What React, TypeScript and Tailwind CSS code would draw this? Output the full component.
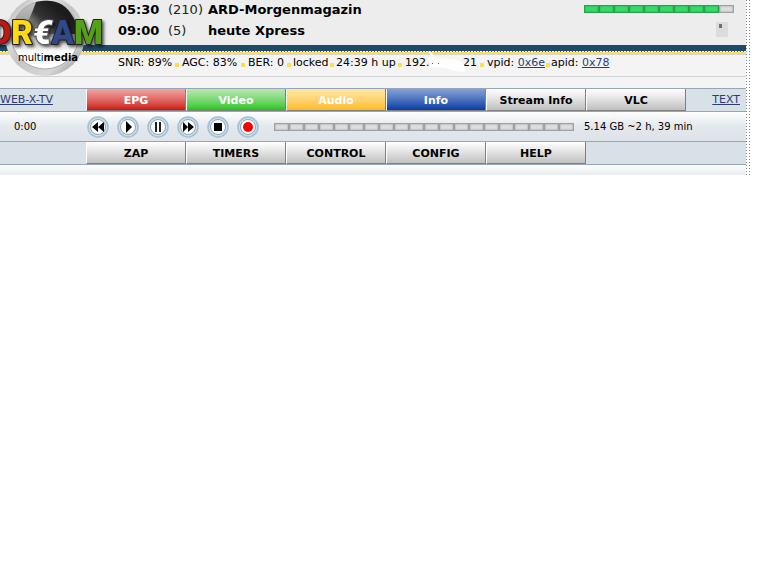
import { ReactNode } from "react";

type Tab = {
  label: string;
  className: string;
};

const mainTabs: Tab[] = [
  { label: "EPG", className: "text-white from-[#f4a4a4] via-[#e88080] to-[#cc0c0c]" },
  { label: "Video", className: "text-white from-[#b8e8b0] via-[#96de8e] to-[#14c80c]" },
  { label: "Audio", className: "text-white from-[#ffe6a4] via-[#ffdc88] to-[#fdbc10]" },
  { label: "Info", className: "text-white from-[#84a0dc] via-[#6486c8] to-[#083ca4]" },
  { label: "Stream Info", className: "text-black from-white via-[#eeeeee] to-[#c0c0c0]" },
  { label: "VLC", className: "text-black from-white via-[#eeeeee] to-[#c0c0c0]" },
];

const subTabs = ["ZAP", "TIMERS", "CONTROL", "CONFIG", "HELP"];

const events = [
  { time: "05:30", duration: "(210)", title: "ARD-Morgenmagazin" },
  { time: "09:00", duration: "(5)", title: "heute Xpress" },
];

const players = [
  { label: "Rewind", icon: <path d="M11 6v10l-6-5zM17 6v10l-6-5z" fill="#000" /> },
  { label: "Play", icon: <path d="M9 5l6 6-6 6z" fill="#000" /> },
  { label: "Pause", icon: <path d="M8 6h2v10H8zM12 6h2v10h-2z" fill="#222" /> },
  { label: "Forward", icon: <path d="M6 6v10l5-5zM11 6v10l6-5z" fill="#000" /> },
  { label: "Stop", icon: <path d="M7 7h8v8H7z" fill="#000" /> },
  { label: "Record", icon: <circle cx="11" cy="11" r="5" fill="#f80000" /> },
];

function TabButton({ label, className }: Tab) {
  return (
    <button
      type="button"
      className={`h-[22px] w-[100px] shrink-0 border-r border-b border-l border-r-[#808080] border-b-[#808080] border-l-white bg-linear-to-b via-30% pt-[3px] text-[11px] leading-[18px] font-bold ${className}`}
    >
      {label}
    </button>
  );
}

function Segments({ count, filled }: { count: number; filled: number }) {
  return (
    <div className="flex h-2 shrink-0">
      {Array.from({ length: count }, (_, i) => (
        <span
          key={i}
          className={
            i < filled
              ? "w-[15px] border-x border-y border-[#28a050] bg-[#36dc68] shadow-[inset_0_0_2px_#28a050]"
              : "w-[15px] border-x border-y border-[#a0a0a4] bg-[#dedede] shadow-[inset_0_0_2px_#909094]"
          }
        />
      ))}
    </div>
  );
}

// text first, then a yellow square centred in whatever is left before the next one
function Stat({ width, last, children }: { width: string; last?: boolean; children: ReactNode }) {
  return (
    <li className={`flex shrink-0 whitespace-nowrap ${width}`}>
      {children}
      {!last && (
        <span aria-hidden="true" className="flex grow justify-center pt-2">
          <span className="size-1 bg-[#ffdc50]" />
        </span>
      )}
    </li>
  );
}

function Logo() {
  return (
    <svg width="112" height="80" viewBox="0 0 112 80" className="absolute top-0 left-0" role="img" aria-label="Dream multimedia">
      <defs>
        <linearGradient id="rim" x1="0" y1="0" x2="1" y2="1">
          <stop offset="0" stopColor="#8c8c8c" />
          <stop offset="0.25" stopColor="#e8e8e8" />
          <stop offset="0.5" stopColor="#c4c4c4" />
          <stop offset="0.75" stopColor="#d8d8d8" />
          <stop offset="1" stopColor="#808080" />
        </linearGradient>
        <linearGradient id="disc" x1="0" y1="0" x2="0" y2="1">
          <stop offset="0" stopColor="#c4c4c4" />
          <stop offset="0.5" stopColor="#8c8c8c" />
          <stop offset="0.55" stopColor="#bbb" />
          <stop offset="0.75" stopColor="#fff" />
        </linearGradient>
        <linearGradient id="dark" x1="0" y1="0.6" x2="0.6" y2="0.2">
          <stop offset="0" stopColor="#333" stopOpacity="0" />
          <stop offset="0.5" stopColor="#333" />
          <stop offset="1" stopColor="#1c1c1c" />
        </linearGradient>
        <filter id="shadow" x="-20%" y="-20%" width="150%" height="150%">
          <feDropShadow dx="2" dy="2" stdDeviation="1.5" floodOpacity="0.6" />
        </filter>
      </defs>
      <circle cx="45" cy="36" r="40" fill="url(#rim)" />
      <circle cx="45" cy="35" r="34" fill="url(#disc)" stroke="#aaa" />
      <path d="M36 2q26-6 37 15 5 8 5 17H20Q30 20 36 2z" fill="url(#dark)" />
      <text
        x="-10"
        y="44"
        filter="url(#shadow)"
        fontFamily="Roboto, sans-serif"
        fontWeight="900"
        fontSize="33"
        stroke="#222"
        strokeWidth="2"
        strokeLinejoin="round"
        paintOrder="stroke"
      >
        <tspan fill="#c01818">D</tspan>
        <tspan fill="#ffd814">R</tspan>
        <tspan fill="#fff" fontStyle="italic" stroke="#555">€</tspan>
        <tspan fill="#30468c">A</tspan>
        <tspan fill="#54a018">M</tspan>
      </text>
      <text x="18" y="61" fontSize="10" fontFamily="'DejaVu Sans', sans-serif" fill="#000">
        multi<tspan fontWeight="bold">media</tspan>
      </text>
    </svg>
  );
}

export default function App() {
  return (
    <div className="flex bg-white pr-[22px] font-['DejaVu_Sans',sans-serif] text-black">
      <main className="relative min-w-0 grow overflow-hidden">
        <header className="flex h-[45px] items-start justify-between bg-[#ededed] pr-3 pl-[118px]">
          <ul className="flex flex-col gap-px text-[13px] leading-5">
            {events.map((event) => (
              <li key={event.time} className="flex">
                <b className="w-[50px]">{event.time}</b>
                <span className="w-10 text-[#222]">{event.duration}</span>
                <b>{event.title}</b>
              </li>
            ))}
          </ul>
          <div className="flex flex-col items-end gap-[9px] pt-[5px]">
            <Segments count={10} filled={9} />
            <div className="mr-[6px] h-[15px] w-3 bg-[#dcdcdc] pt-[2px] pl-[3px]">
              <div className="h-1 w-[3px] bg-[#667080]" />
            </div>
          </div>
        </header>

        <div className="h-[6px] bg-[#1e4a6a]" />
        <div className="h-px bg-[repeating-linear-gradient(90deg,#ffffff_0_2px,#606060_2px_3px)]" />
        <div className="h-[2px] bg-[#ffdc50]" />

        <ul className="relative flex h-[23px] border-t border-b border-t-[#d8d8d8] border-b-[#d0d4d4] bg-[#f4f4f4] pl-[118px] text-[11px] leading-4">
          <Stat width="w-[64px]">SNR: 89%</Stat>
          <Stat width="w-[66px]">AGC: 83%</Stat>
          <Stat width="w-[45px]">BER: 0</Stat>
          <Stat width="w-[43px]">locked</Stat>
          <Stat width="w-[69px]">24:39 h up</Stat>
          <Stat width="w-[82px]">
            <span className="w-[58px]">192.</span>
            <span>21</span>
          </Stat>
          <Stat width="w-[64px]">
            <span>
              vpid: <a href="#vpid" className="text-[#2c3c78] underline">0x6e</a>
            </span>
          </Stat>
          <Stat width="w-[64px]" last>
            <span>
              apid: <a href="#apid" className="text-[#2c3c78] underline">0x78</a>
            </span>
          </Stat>
          <li aria-hidden="true" className="absolute top-[-5px] left-[427px]">
            <svg width="40" height="24" viewBox="0 0 40 24">
              <path d="M1 1l3 1 5 6q10 1 22 2 8 3 7 12l-9-1-12-3-14-1-2-9 4-1z" fill="#fff" />
              <path d="M5 13h1v1H5zM11 13h1v1h-1z" fill="#555" />
            </svg>
          </li>
        </ul>
        <div className="h-[11px] bg-[#f4f4f4]" />

        <nav className="flex h-6 border-y border-[#98a4b8] bg-[#d8e0e8]">
          <div className="flex w-[86px] shrink-0 items-center text-[11px] text-[#2c3c78]">
            <a href="#web-x-tv" className="whitespace-nowrap underline">WEB-X-TV</a>
          </div>
          {mainTabs.map((tab) => (
            <TabButton key={tab.label} {...tab} />
          ))}
          <div className="ml-auto flex items-center pr-[6px] text-[11px] text-[#2c3c78]">
            <a href="#text" className="underline">TEXT</a>
          </div>
        </nav>

        <section className="flex h-[29px] items-center bg-linear-to-b from-white via-[#e2e8ec] via-50% to-[#dfe3ea] text-[10px]">
          <span className="w-[87px] shrink-0 pl-[14px]">0:00</span>
          <div className="flex w-[187px] shrink-0 gap-2">
            {players.map(({ label, icon }) => (
              <button key={label} type="button" aria-label={label}>
                <svg width="22" height="22" viewBox="0 0 22 22">
                  <circle cx="11" cy="11" r="10" fill="#c4e0f4" stroke="#a4c0d0" strokeWidth="1.5" />
                  <circle cx="11" cy="11" r="7.5" fill="#fff" stroke="#98a4ac" />
                  {icon}
                </svg>
              </button>
            ))}
          </div>
          <Segments count={20} filled={0} />
          <span className="ml-[10px] whitespace-nowrap">5.14 GB ~2 h, 39 min</span>
        </section>

        <nav className="flex h-6 border-y border-[#98a4b8] bg-[#d8e0e8] pl-[86px]">
          {subTabs.map((label) => (
            <TabButton key={label} label={label} className="text-black from-white via-[#eeeeee] to-[#c0c0c0]" />
          ))}
        </nav>
        <div className="h-[10px] bg-linear-to-b from-white to-[#e8ecf0]" />
        <Logo />
      </main>
      <div className="flex shrink-0 gap-[2px]">
        <div className="w-px bg-[repeating-linear-gradient(180deg,#888_0_1px,#fff_1px_3px)]" />
        <div className="w-px bg-[repeating-linear-gradient(180deg,#888_0_1px,#fff_1px_3px)]" />
      </div>
    </div>
  );
}
